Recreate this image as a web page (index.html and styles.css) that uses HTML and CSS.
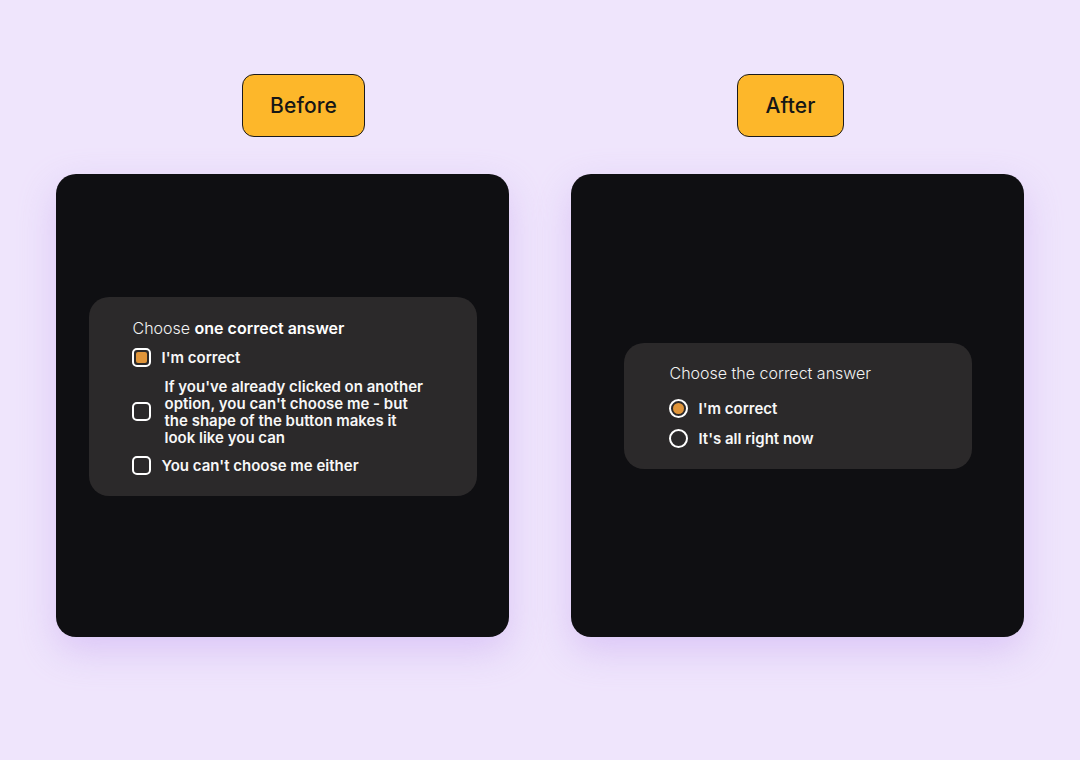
FILE: index.html
```html
<!DOCTYPE html>
<html>
<head>
<meta charset="utf-8">
<link rel="stylesheet" href="styles.css">
</head>
<body>
<div class="page">
  <div class="column">
    <div class="label label-before">Before</div>
    <div class="panel">
      <div class="card card-before">
        <div class="title"><span class="light">Choose</span> <span class="strong">one correct answer</span></div>
        <div class="option">
          <span class="box checked"></span>
          <span class="text">I'm correct</span>
        </div>
        <div class="option option-wide">
          <span class="box"></span>
          <span class="text multi">If you've already clicked on another option, you can't choose me - but the shape of the button makes it look like you can</span>
        </div>
        <div class="option">
          <span class="box"></span>
          <span class="text">You can't choose me either</span>
        </div>
      </div>
    </div>
  </div>
  <div class="column">
    <div class="label label-after">After</div>
    <div class="panel">
      <div class="card card-after">
        <div class="title"><span class="light">Choose the correct answer</span></div>
        <div class="options-after">
          <div class="option">
            <span class="radio checked"></span>
            <span class="text">I'm correct</span>
          </div>
          <div class="option">
            <span class="radio"></span>
            <span class="text">It's all right now</span>
          </div>
        </div>
      </div>
    </div>
  </div>
</div>
</body>
</html>
```
FILE: styles.css
```css
* { box-sizing: border-box; }
html, body {
  margin: 0;
  padding: 0;
  width: 1080px;
  height: 760px;
  overflow: hidden;
}
body {
  background: #efe5fc;
  font-family: Inter, "Noto Sans", sans-serif;
}
.page {
  display: flex;
  gap: 62px;
  padding: 74px 0 0 56px;
}
.column {
  width: 453px;
  display: flex;
  flex-direction: column;
}
.label {
  height: 63px;
  background: #fdb72a;
  border: 1.5px solid #1b1a1c;
  border-radius: 12px;
  display: flex;
  align-items: center;
  justify-content: center;
  font-size: 21px;
  font-weight: 500;
  color: #161616;
  letter-spacing: 0.1px;
}
.label-before { width: 123px; margin-left: 186px; }
.label-after { width: 107px; margin-left: 166px; }
.panel {
  margin-top: 37px;
  height: 463px;
  background: #0f0f12;
  border-radius: 20px;
  box-shadow: 0 14px 36px rgba(196, 160, 240, 0.45);
  display: flex;
  align-items: center;
  justify-content: center;
}
.card {
  background: #2b292a;
  border-radius: 20px;
  display: flex;
  flex-direction: column;
  color: #ffffff;
}
.card-before {
  width: 388px;
  padding: 21px 20px 20px 43px;
  gap: 10px;
  margin-bottom: 19px;
}
.card-after {
  width: 348px;
  padding: 20px 20px 20px 45px;
  gap: 16px;
}
.options-after {
  display: flex;
  flex-direction: column;
  gap: 10px;
}
.title {
  font-size: 16px;
  line-height: 20px;
  color: #f2f2f2;
  padding-left: 1px;
}
.light { font-weight: 300; }
.strong { font-weight: 600; color: #ffffff; }
.option {
  display: flex;
  align-items: center;
  gap: 11px;
}
.option-wide { gap: 14px; }
.text {
  font-size: 15px;
  line-height: 20px;
  font-weight: 600;
  color: #f7f7f7;
}
.text.multi {
  line-height: 17px;
  width: 264px;
}
.box, .radio {
  flex: none;
  width: 19px;
  height: 19px;
  border: 2px solid #ffffff;
  display: flex;
  align-items: center;
  justify-content: center;
}
.box { border-radius: 5px; }
.radio { border-radius: 50%; }
.box.checked::after, .radio.checked::after {
  content: "";
  width: 11px;
  height: 11px;
  background: #e0953a;
}
.box.checked::after { border-radius: 2px; }
.radio.checked::after { border-radius: 50%; }
```
